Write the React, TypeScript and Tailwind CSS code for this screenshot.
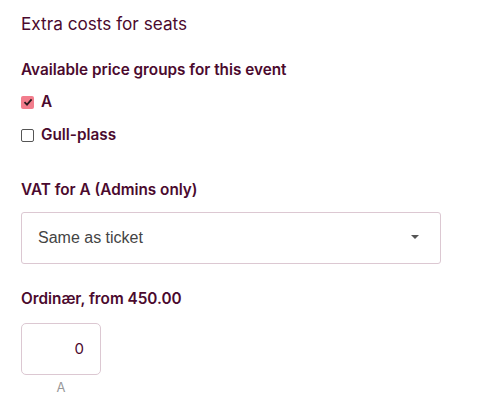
export default function App() {
  return (
    <div className="min-h-screen bg-white px-[21px] pt-[12px] text-[#4b0a2e] font-['Inter','Liberation_Sans',sans-serif]">
      <h2 className="text-[17.2px] leading-[24px] font-normal">Extra costs for seats</h2>

      <div className="mt-[24px] text-[15.3px] leading-[20px] font-semibold">
        Available price groups for this event
      </div>

      <label className="mt-[12px] flex items-center gap-[7px] h-[20px] text-[15.3px] font-semibold">
        <span className="w-[13px] h-[13px] rounded-[2px] bg-[#f27d8c] flex items-center justify-center">
          <svg width="10" height="10" viewBox="0 0 10 10">
            <path d="M1.5 5.2 L4 7.6 L8.6 2.4" fill="none" stroke="#2a1a1f" strokeWidth="1.8" />
          </svg>
        </span>
        A
      </label>

      <label className="mt-[13px] flex items-center gap-[7px] h-[20px] text-[15.3px] font-semibold">
        <span className="w-[13px] h-[13px] rounded-[2px] border border-[#555] bg-white" />
        Gull-plass
      </label>

      <div className="mt-[35px] text-[15.3px] leading-[20px] font-semibold">VAT for A (Admins only)</div>

      <div className="mt-[12px] w-[420px] h-[52px] border border-[#dcc8d2] rounded-[3px] flex items-center justify-between pl-[16px] pr-[21px]">
        <span className="text-[16px] text-[#444] font-['Liberation_Sans',Arial,sans-serif]">Same as ticket</span>
        <svg width="8" height="4" viewBox="0 0 8 4" className="-mt-[2px]">
          <path d="M0 0 L8 0 L4 4 Z" fill="#555" />
        </svg>
      </div>

      <div className="mt-[25px] text-[15.3px] leading-[20px] font-semibold">Ordinær, from 450.00</div>

      <div className="mt-[14px] w-[80px] flex flex-col items-center">
        <div className="w-[80px] h-[52px] border border-[#dcc8d2] rounded-[5px] flex items-center justify-end pr-[16px] text-[15px]">
          0
        </div>
        <div className="mt-[3px] text-[13px] text-[#999]">A</div>
      </div>
    </div>
  )
}
